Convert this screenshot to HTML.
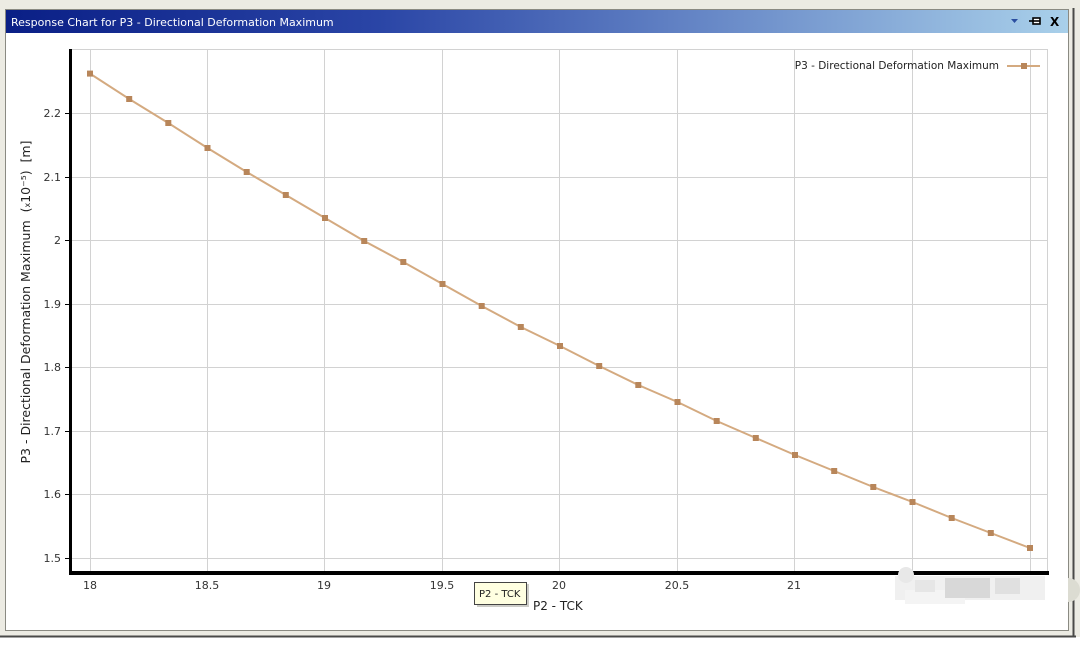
<!DOCTYPE html>
<html><head><meta charset="utf-8"><style>
html,body{margin:0;padding:0;width:1080px;height:646px;overflow:hidden;background:#fff}
svg{display:block}
text{font-family:"DejaVu Sans","Liberation Sans",sans-serif}
</style></head><body>
<svg width="1080" height="646" viewBox="0 0 1080 646" xmlns="http://www.w3.org/2000/svg">
<defs>
<linearGradient id="tb" x1="0" x2="1" y1="0" y2="0">
<stop offset="0" stop-color="#0a1f86"/><stop offset="0.35" stop-color="#2a45a6"/><stop offset="1" stop-color="#a9d0ea"/>
</linearGradient>
</defs>
<rect x="0" y="0" width="1080" height="640" fill="#ecebe3"/>
<rect x="0" y="637" width="1080" height="9" fill="#fff"/>
<line x1="0" y1="636.5" x2="1076" y2="636.5" stroke="#4a4a48" stroke-width="2"/>
<line x1="1073.5" y1="8" x2="1073.5" y2="637" stroke="#4a4a48" stroke-width="2"/>
<rect x="5.5" y="9.5" width="1063" height="621" fill="#fff" stroke="#8a8a82"/>
<rect x="6" y="10" width="1062" height="23" fill="url(#tb)"/>
<text x="11" y="26" font-size="11" fill="#fff">Response Chart for P3 - Directional Deformation Maximum</text>
<polygon points="1011,19 1018,19 1014.5,23" fill="#2b4ea0"/>
<g stroke="#000" stroke-width="1.6" fill="none"><line x1="1029" y1="21" x2="1033" y2="21"/><rect x="1033" y="18" width="7" height="6" fill="#fff"/><line x1="1033" y1="21" x2="1040" y2="21"/></g>
<text x="1050" y="26" font-size="12" font-weight="bold" fill="#000" font-family="Liberation Sans,sans-serif">X</text>

<g stroke="#d2d2d2" stroke-width="1">
<line x1="71" y1="49.5" x2="1048" y2="49.5"/>
<line x1="71" y1="113.5" x2="1048" y2="113.5"/>
<line x1="71" y1="177.5" x2="1048" y2="177.5"/>
<line x1="71" y1="240.5" x2="1048" y2="240.5"/>
<line x1="71" y1="304.5" x2="1048" y2="304.5"/>
<line x1="71" y1="367.5" x2="1048" y2="367.5"/>
<line x1="71" y1="431.5" x2="1048" y2="431.5"/>
<line x1="71" y1="494.5" x2="1048" y2="494.5"/>
<line x1="71" y1="558.5" x2="1048" y2="558.5"/>
<line x1="90.5" y1="49" x2="90.5" y2="572"/>
<line x1="207.5" y1="49" x2="207.5" y2="572"/>
<line x1="324.5" y1="49" x2="324.5" y2="572"/>
<line x1="442.5" y1="49" x2="442.5" y2="572"/>
<line x1="559.5" y1="49" x2="559.5" y2="572"/>
<line x1="677.5" y1="49" x2="677.5" y2="572"/>
<line x1="794.5" y1="49" x2="794.5" y2="572"/>
<line x1="912.5" y1="49" x2="912.5" y2="572"/>
<line x1="1030.5" y1="49" x2="1030.5" y2="572"/>
<line x1="1047.5" y1="49" x2="1047.5" y2="572"/>
</g>
<rect x="69" y="49" width="3" height="526" fill="#000"/>
<rect x="69" y="571" width="980" height="4" fill="#000"/>
<g stroke="#000"><line x1="65" y1="113.5" x2="69" y2="113.5"/><line x1="65" y1="177.5" x2="69" y2="177.5"/><line x1="65" y1="240.5" x2="69" y2="240.5"/><line x1="65" y1="304.5" x2="69" y2="304.5"/><line x1="65" y1="367.5" x2="69" y2="367.5"/><line x1="65" y1="431.5" x2="69" y2="431.5"/><line x1="65" y1="494.5" x2="69" y2="494.5"/><line x1="65" y1="558.5" x2="69" y2="558.5"/></g>
<g font-size="11" fill="#333" text-anchor="end">
<text x="61" y="117">2.2</text><text x="61" y="181">2.1</text><text x="61" y="244">2</text><text x="61" y="308">1.9</text><text x="61" y="371">1.8</text><text x="61" y="435">1.7</text><text x="61" y="498">1.6</text><text x="61" y="562">1.5</text>
</g>
<g font-size="11" fill="#333" text-anchor="middle">
<text x="90" y="589">18</text><text x="207" y="589">18.5</text><text x="324" y="589">19</text><text x="442" y="589">19.5</text><text x="559" y="589">20</text><text x="677" y="589">20.5</text><text x="794" y="589">21</text>
</g>
<text transform="translate(30,302) rotate(-90)" font-size="12.5" fill="#222" text-anchor="middle" xml:space="preserve">P3 - Directional Deformation Maximum  (<tspan font-size="8">x</tspan>10⁻⁵)  [m]</text>
<text x="533" y="610" font-size="12" fill="#222">P2 - TCK</text>
<rect x="477" y="584" width="52" height="23" fill="#9a9a90" opacity="0.5"/>
<rect x="474.5" y="582.5" width="52" height="22" fill="#ffffe1" stroke="#444"/>
<text x="479" y="597" font-size="10" fill="#222">P2 - TCK</text>

<polyline fill="none" stroke="#d4aa80" stroke-width="2" points="90,73.6 129.2,99 168.3,123 207.5,148 246.7,172 285.8,195 325,218 364.2,241 403.3,262 442.5,284 481.7,306 520.8,327 560,346 599.2,366 638.3,385 677.5,402 716.7,421 755.8,438 795,455 834.2,471 873.3,487 912.5,502 951.7,518 990.8,533 1030,548"/>
<g fill="#b8865a">
<rect x="87" y="70.6" width="6" height="6"/><rect x="126.2" y="96" width="6" height="6"/><rect x="165.3" y="120" width="6" height="6"/><rect x="204.5" y="145" width="6" height="6"/><rect x="243.7" y="169" width="6" height="6"/><rect x="282.8" y="192" width="6" height="6"/><rect x="322" y="215" width="6" height="6"/><rect x="361.2" y="238" width="6" height="6"/><rect x="400.3" y="259" width="6" height="6"/><rect x="439.5" y="281" width="6" height="6"/><rect x="478.7" y="303" width="6" height="6"/><rect x="517.8" y="324" width="6" height="6"/><rect x="557" y="343" width="6" height="6"/><rect x="596.2" y="363" width="6" height="6"/><rect x="635.3" y="382" width="6" height="6"/><rect x="674.5" y="399" width="6" height="6"/><rect x="713.7" y="418" width="6" height="6"/><rect x="752.8" y="435" width="6" height="6"/><rect x="792" y="452" width="6" height="6"/><rect x="831.2" y="468" width="6" height="6"/><rect x="870.3" y="484" width="6" height="6"/><rect x="909.5" y="499" width="6" height="6"/><rect x="948.7" y="515" width="6" height="6"/><rect x="987.8" y="530" width="6" height="6"/><rect x="1027" y="545" width="6" height="6"/>
</g>
<text x="999" y="69" font-size="10.5" fill="#222" text-anchor="end">P3 - Directional Deformation Maximum</text>
<line x1="1007" y1="66" x2="1040" y2="66" stroke="#d4aa80" stroke-width="2"/>
<rect x="1021" y="63" width="6" height="6" fill="#b8865a"/>

<g>
<rect x="895" y="576" width="150" height="24" fill="#f0f0f0"/>
<rect x="905" y="590" width="60" height="14" fill="#f4f4f4"/>
<rect x="915" y="580" width="20" height="12" fill="#e6e6e6"/>
<rect x="945" y="578" width="45" height="20" fill="#d8d8d8"/>
<rect x="995" y="578" width="25" height="16" fill="#e0e0e0"/>
<circle cx="906" cy="575" r="8" fill="#e8e8e8"/>
</g>
<path d="M1068 578 a12 12 0 0 1 0 24 z" fill="#dcdcd2"/>
</svg>
</body></html>
